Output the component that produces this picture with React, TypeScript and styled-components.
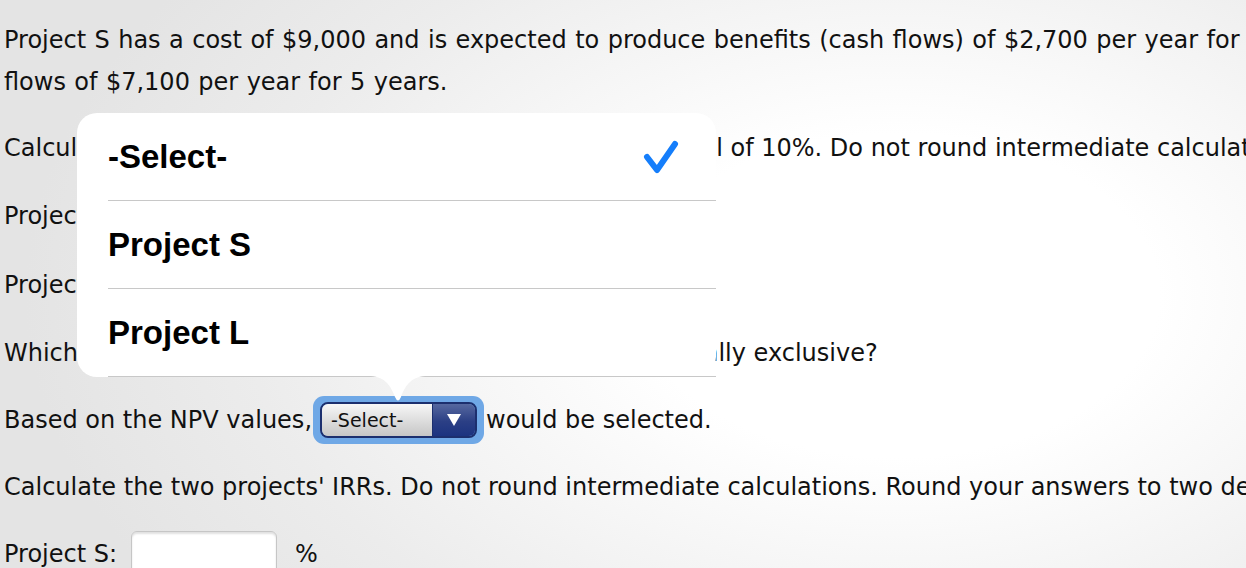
import React from 'react';
import styled, { createGlobalStyle } from 'styled-components';

const GlobalStyle = createGlobalStyle`
  html, body {
    margin: 0;
    height: 100%;
    overflow: hidden;
  }
  body {
    background: radial-gradient(ellipse 70% 95% at 72% 52%, #ffffff 0%, #ffffff 30%, #ececec 75%, #e4e4e4 100%);
  }
`;

const Page = styled.div`
  position: relative;
  height: 568px;
  padding: 19px 0 0 4px;
  box-sizing: border-box;
  font-family: 'DejaVu Sans', Verdana, sans-serif;
  font-size: 24px;
  color: #111;
`;

const Para = styled.div<{ $tall?: boolean }>`
  display: flex;
  align-items: center;
  height: ${(p) => (p.$tall ? 44 : 42)}px;
  margin-bottom: 25px;
  white-space: nowrap;
`;

const Block = styled.div`
  line-height: 42px;
  white-space: nowrap;
  word-spacing: 0.8px;
  margin-bottom: 24px;
`;

const TextInput = styled.div`
  flex: none;
  width: 146px;
  height: 40px;
  margin: 0 18px 0 12px;
  border: 1px solid #c6c6c6;
  border-radius: 6px;
  background: #fff;
  box-shadow: inset 0 2px 2px rgba(0, 0, 0, 0.12);
  box-sizing: border-box;
`;

const BottomInput = styled(TextInput)`
  height: 46px;
  margin-left: 14px;
`;

const Glow = styled.div`
  flex: none;
  display: inline-flex;
  padding: 6px 7px;
  margin: 0 2px 0 1px;
  background: #6fa8e6;
  border-radius: 11px;
`;

const SelectBox = styled.div`
  display: flex;
  width: 157px;
  height: 36px;
  border: 2px solid #1c2f6e;
  border-radius: 8px;
  overflow: hidden;
  box-sizing: border-box;
`;

const SelectLabel = styled.div`
  flex: 1;
  display: flex;
  align-items: center;
  padding-left: 9px;
  font-size: 19px;
  color: #111;
  background: linear-gradient(#f7f7f7, #d9d9d9 60%, #c6c6c6);
`;

const SelectButton = styled.div`
  width: 42px;
  display: flex;
  align-items: center;
  justify-content: center;
  border-left: 1px solid #1c2f6e;
  background: linear-gradient(#56689f, #2b3f85 55%, #1c3380);
`;

const Popover = styled.div`
  position: absolute;
  left: 77px;
  top: 113px;
  width: 639px;
  height: 264px;
  background: #fff;
  border-radius: 20px;
  font-family: 'Liberation Sans', Arial, sans-serif;
  font-weight: bold;
  font-size: 33px;
  color: #000;
`;

const Option = styled.div<{ $last?: boolean }>`
  display: flex;
  align-items: center;
  justify-content: space-between;
  height: 88px;
  margin-left: 31px;
  padding-right: 36px;
  box-sizing: border-box;
  border-bottom: 1px solid #c8c8c8;
  margin-bottom: ${(p) => (p.$last ? '-1px' : '0')};
`;

const Pointer = styled.svg`
  position: absolute;
  left: 291px;
  top: 263px;
`;

const Check = () => (
  <svg width="38" height="36" viewBox="0 0 38 36">
    <path d="M5 18 L15 31 L33 5" fill="none" stroke="#157efb" strokeWidth="6" strokeLinecap="round" strokeLinejoin="round" />
  </svg>
);

const options = ['-Select-', 'Project S', 'Project L'];

export default function App() {
  return (
    <>
      <GlobalStyle />
      <Page>
        <Block>
          Project S has a cost of $9,000 and is expected to produce benefits (cash flows) of $2,700 per year for 5 years. Project L costs $30,000 and is expected to produce cash
          <br />
          flows of $7,100 per year for 5 years.
        </Block>
        <Para>
          Calculate the two projects' NPVs, assuming a cost of capital of 10%. Do not round intermediate calculations. Round your answers to the nearest cent.
        </Para>
        <Para $tall>
          Project S: $<TextInput />
        </Para>
        <Para $tall>
          Project L: $<TextInput />
        </Para>
        <Para>Which project would be selected, assuming they are mutually exclusive?</Para>
        <Para>
          Based on the NPV values,
          <Glow>
            <SelectBox>
              <SelectLabel>-Select-</SelectLabel>
              <SelectButton>
                <svg width="16" height="14" viewBox="0 0 16 14">
                  <path d="M1 1 H15 L8 13 Z" fill="#fff" />
                </svg>
              </SelectButton>
            </SelectBox>
          </Glow>
          would be selected.
        </Para>
        <Para>
          Calculate the two projects' IRRs. Do not round intermediate calculations. Round your answers to two decimal places.
        </Para>
        <Para>
          Project S:<BottomInput />%
        </Para>

        <Popover>
          {options.map((o, i) => (
            <Option key={o} $last={i === options.length - 1}>
              {o}
              {i === 0 && <Check />}
            </Option>
          ))}
          <Pointer width="60" height="28" viewBox="0 0 60 28">
            <path d="M0 0 C16 0 22 8 27 21 Q30 28 33 21 C38 8 44 0 60 0 Z" fill="#fff" />
          </Pointer>
        </Popover>
      </Page>
    </>
  );
}
